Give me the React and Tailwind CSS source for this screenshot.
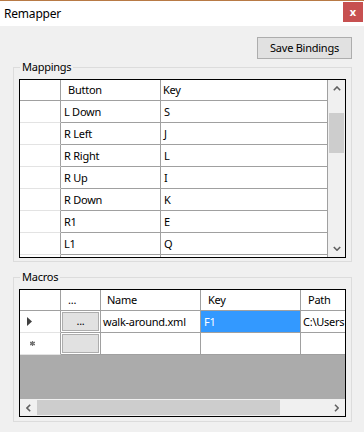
import React from "react";

const Chevron = ({ dir }) => {
  const paths = {
    up: "M0.8 4.2 L4 1 L7.2 4.2",
    down: "M0.8 1 L4 4.2 L7.2 1",
    left: "M4.2 0.8 L1 4 L4.2 7.2",
    right: "M1 0.8 L4.2 4 L1 7.2",
  };
  const horiz = dir === "left" || dir === "right";
  return (
    <svg width={horiz ? 5 : 8} height={horiz ? 8 : 5} viewBox={horiz ? "0 0 5 8" : "0 0 8 5"}>
      <path d={paths[dir]} stroke="#606060" strokeWidth="1.6" fill="none" />
    </svg>
  );
};

const mappings = [
  ["L Down", "S"],
  ["R Left", "J"],
  ["R Right", "L"],
  ["R Up", "I"],
  ["R Down", "K"],
  ["R1", "E"],
  ["L1", "Q"],
  ["", ""],
];

export default function App() {
  return (
    <div className="w-[364px] h-[432px] bg-[#f0f0f0] overflow-hidden text-[11px] tracking-[-0.25px] text-black font-['Noto_Sans',sans-serif] leading-[16px]">
      {/* Title bar */}
      <div className="h-[26px] bg-white border-t border-[#b87a45] flex justify-between">
        <div className="pl-[4px] pt-[5px] text-[12px] tracking-[-0.2px]">Remapper</div>
        <div className="w-[20px] h-[20px] mt-[1px] mr-[1px] bg-[#c75050] flex items-center justify-center text-white text-[11px] font-bold leading-none pb-[2px] tracking-normal">
          x
        </div>
      </div>

      {/* Save button */}
      <div className="flex justify-end pr-[12px] pt-[11px]">
        <div className="w-[95px] h-[22px] bg-[#e1e1e1] border border-[#adadad] flex items-center justify-center">
          Save Bindings
        </div>
      </div>

      {/* Mappings */}
      <fieldset className="ml-[13px] w-[339px] border border-[#dcdcdc] pl-[5px] pr-[5px] pt-[4px] pb-[3px]">
        <legend className="ml-[1px] px-[2px] leading-[16px]">Mappings</legend>
        <div className="w-[327px] h-[179px] border border-black bg-white flex">
          <div className="w-[308px] flex flex-col">
            <div className="h-[21px] shrink-0 flex border-b border-[#a0a0a0]">
              <div className="w-[41px] border-r border-[#a0a0a0]" />
              <div className="w-[100px] border-r border-[#a0a0a0] pl-[7px] flex items-center">Button</div>
              <div className="w-[167px] border-r border-[#a0a0a0] pl-[2px] flex items-center">Key</div>
            </div>
            <div className="h-[156px] overflow-hidden">
              {mappings.map(([b, k], i) => (
                <div key={i} className="h-[22px] flex">
                  <div className="w-[41px] border-r border-[#a0a0a0] border-b border-b-[#e3e3e3]" />
                  <div className="w-[100px] border-r border-b border-[#a0a0a0] pl-[3px] flex items-center">{b}</div>
                  <div className="w-[167px] border-r border-b border-[#a0a0a0] pl-[3px] flex items-center">{k}</div>
                </div>
              ))}
            </div>
          </div>
          {/* vertical scrollbar */}
          <div className="w-[17px] bg-[#f0f0f0] flex flex-col">
            <div className="h-[17px] flex items-center justify-center">
              <Chevron dir="up" />
            </div>
            <div className="flex-1 flex flex-col">
              <div className="h-[16px]" />
              <div className="h-[40px] mx-[1px] bg-[#cdcdcd]" />
            </div>
            <div className="h-[17px] flex items-center justify-center">
              <Chevron dir="down" />
            </div>
          </div>
        </div>
      </fieldset>

      {/* Macros */}
      <fieldset className="mt-[7px] ml-[13px] w-[339px] border border-[#dcdcdc] pl-[5px] pr-[5px] pt-[4px] pb-[4px]">
        <legend className="ml-[1px] px-[2px] leading-[16px]">Macros</legend>
        <div className="w-[327px] h-[128px] border border-black bg-white flex flex-col">
          <div className="h-[21px] shrink-0 flex border-b border-[#a0a0a0] whitespace-nowrap">
            <div className="w-[41px] shrink-0 border-r border-[#a0a0a0]" />
            <div className="w-[40px] shrink-0 border-r border-[#a0a0a0] pl-[7px] flex items-center">...</div>
            <div className="w-[100px] shrink-0 border-r border-[#a0a0a0] pl-[6px] flex items-center">Name</div>
            <div className="w-[100px] shrink-0 border-r border-[#a0a0a0] pl-[7px] flex items-center">Key</div>
            <div className="flex-1 overflow-hidden pl-[7px] flex items-center">Path</div>
          </div>
          {/* row 1 */}
          <div className="h-[22px] shrink-0 flex whitespace-nowrap">
            <div className="w-[41px] shrink-0 border-r border-[#a0a0a0] border-b border-b-[#e3e3e3] flex items-center pl-[7px]">
              <svg width="5" height="9" viewBox="0 0 5 9">
                <path d="M0 0 L5 4.5 L0 9 Z" fill="#404040" />
              </svg>
            </div>
            <div className="w-[40px] shrink-0 border-r border-b border-[#a0a0a0] flex items-center justify-center">
              <div className="w-[37px] h-[19px] bg-[#e1e1e1] border border-[#adadad] flex items-center justify-center leading-none pb-[3px]">
                ...
              </div>
            </div>
            <div className="w-[100px] shrink-0 border-r border-b border-[#a0a0a0] pl-[2px] flex items-center">walk-around.xml</div>
            <div className="w-[100px] shrink-0 border-r border-b border-[#a0a0a0] bg-[#3399ff] text-white pl-[3px] flex items-center">F1</div>
            <div className="flex-1 overflow-hidden border-b border-[#a0a0a0] pl-[2px] flex items-center">C:\Users</div>
          </div>
          {/* row 2 (new row) */}
          <div className="h-[22px] shrink-0 flex">
            <div className="w-[41px] shrink-0 border-r border-[#a0a0a0] border-b border-b-[#e3e3e3] flex items-center pl-[10px]">
              <svg width="5" height="5" viewBox="0 0 5 5">
                <path d="M2.5 0 V5 M0 1.2 L5 3.8 M0 3.8 L5 1.2" stroke="#707070" strokeWidth="1.3" />
              </svg>
            </div>
            <div className="w-[40px] shrink-0 border-r border-b border-[#a0a0a0] flex items-center justify-center">
              <div className="w-[37px] h-[19px] bg-[#e1e1e1] border border-[#adadad]" />
            </div>
            <div className="w-[100px] shrink-0 border-r border-b border-[#a0a0a0]" />
            <div className="w-[100px] shrink-0 border-r border-b border-[#a0a0a0]" />
            <div className="flex-1 border-b border-[#a0a0a0]" />
          </div>
          <div className="flex-1 bg-[#ababab]" />
          {/* horizontal scrollbar */}
          <div className="h-[17px] shrink-0 bg-[#f0f0f0] flex">
            <div className="w-[17px] flex items-center justify-center">
              <Chevron dir="left" />
            </div>
            <div className="flex-1 flex items-center">
              <div className="w-[243px] h-[15px] bg-[#cdcdcd]" />
            </div>
            <div className="w-[17px] flex items-center justify-center">
              <Chevron dir="right" />
            </div>
          </div>
        </div>
      </fieldset>
    </div>
  );
}
